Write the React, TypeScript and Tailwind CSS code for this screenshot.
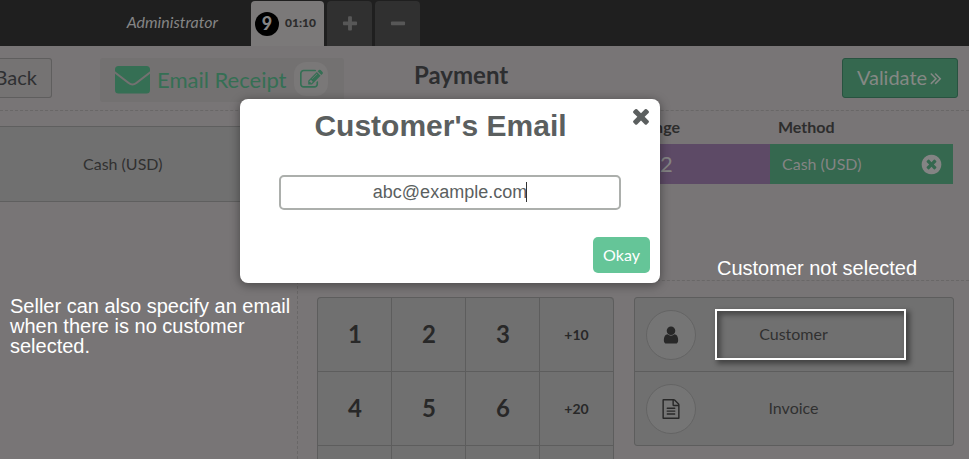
import React from "react";

const ICONS = {
  times:
    "M1490 1322q0 40-28 68l-136 136q-28 28-68 28t-68-28l-294-294-294 294q-28 28-68 28t-68-28l-136-136q-28-28-28-68t28-68l294-294-294-294q-28-28-28-68t28-68l136-136q28-28 68-28t68 28l294 294 294-294q28-28 68-28t68 28l136 136q28 28 28 68t-28 68l-294 294 294 294q28 28 28 68z",
  plus: "M1600 736v192q0 40-28 68t-68 28h-416v416q0 40-28 68t-68 28h-192q-40 0-68-28t-28-68v-416h-416q-40 0-68-28t-28-68v-192q0-40 28-68t68-28h416v-416q0-40 28-68t68-28h192q40 0 68 28t28 68v416h416q40 0 68 28t28 68z",
  minus:
    "M1600 736v192q0 40-28 68t-68 28h-1216q-40 0-68-28t-28-68v-192q0-40 28-68t68-28h1216q40 0 68 28t28 68z",
  angleDouble:
    "M979 960q0 13-10 23l-466 466q-10 10-23 10t-23-10l-50-50q-10-10-10-23t10-23l393-393-393-393q-10-10-10-23t10-23l50-50q10-10 23-10t23 10l466 466q10 10 10 23zm384 0q0 13-10 23l-466 466q-10 10-23 10t-23-10l-50-50q-10-10-10-23t10-23l393-393-393-393q-10-10-10-23t10-23l50-50q10-10 23-10t23 10l466 466q10 10 10 23z",
  edit: "M888 1184l116-116-152-152-116 116v56h96v96h56zm440-720q-16-16-33 1l-350 350q-17 17-1 33t33-1l350-350q17-17 1-33zm80 594v190q0 119-84.5 203.5t-203.5 84.5h-832q-119 0-203.5-84.5t-84.5-203.5v-832q0-119 84.5-203.5t203.5-84.5h832q63 0 117 25 15 7 18 23 3 17-9 29l-49 49q-14 14-32 8-23-6-45-6h-832q-66 0-113 47t-47 113v832q0 66 47 113t113 47h832q66 0 113-47t47-113v-126q0-13 9-22l64-64q15-15 35-7t20 29zm-96-738l288 288-672 672h-288v-288zm444 132l-92 92-288-288 92-92q28-28 68-28t68 28l152 152q28 28 28 68t-28 68z",
  file: "M1596 380q28 28 48 76t20 88v1152q0 40-28 68t-68 28h-1344q-40 0-68-28t-28-68v-1600q0-40 28-68t68-28h896q40 0 88 20t76 48zm-444-244v376h376q-10-29-22-41l-313-313q-12-12-41-22zm384 1528v-1024h-416q-40 0-68-28t-28-68v-416h-768v1536h1280zm-1024-864q0-14 9-23t23-9h704q14 0 23 9t9 23v64q0 14-9 23t-23 9h-704q-14 0-23-9t-9-23v-64zm736 224q14 0 23 9t9 23v64q0 14-9 23t-23 9h-704q-14 0-23-9t-9-23v-64q0-14 9-23t23-9h704zm0 256q14 0 23 9t9 23v64q0 14-9 23t-23 9h-704q-14 0-23-9t-9-23v-64q0-14 9-23t23-9h704z",
  user: "M1536 1399q0 109-62.5 187t-150.5 78h-854q-88 0-150.5-78t-62.5-187q0-85 8.5-160.5t31.5-152 58.5-131 94-89 134.5-34.5q131 128 313 128t313-128q76 0 134.5 34.5t94 89 58.5 131 31.5 152 8.5 160.5zm-256-887q0 159-112.5 271.5t-271.5 112.5-271.5-112.5-112.5-271.5 112.5-271.5 271.5-112.5 271.5 112.5 112.5 271.5z",
  timesCircle:
    "M1277 1122q0-26-19-45l-181-181 181-181q19-19 19-45 0-27-19-46l-90-90q-19-19-46-19-26 0-45 19l-181 181-181-181q-19-19-45-19-27 0-46 19l-90 90q-19 19-19 46 0 26 19 45l181 181-181 181q-19 19-19 45 0 27 19 46l90 90q19 19 46 19 26 0 45-19l181-181 181 181q19 19 45 19 27 0 46-19l90-90q19-19 19-46zm387-226q0 209-103 385.5t-279.5 279.5-385.5 103-385.5-103-279.5-279.5-103-385.5 103-385.5 279.5-279.5 385.5-103 385.5 103 279.5 279.5 103 385.5z",
};

function Icon({ name, className }: { name: keyof typeof ICONS; className: string }) {
  return (
    <svg viewBox="0 0 1792 1792" fill="currentColor" className={`shrink-0 ${className}`}>
      <path d={ICONS[name]} />
    </svg>
  );
}

function TopBar() {
  return (
    <header className="flex h-[46px] shrink-0 items-end bg-[#1f1f1f]">
      <div className="flex h-[46px] w-[251px] items-center justify-end pr-[33px] pb-[2px] text-base text-[#858585] italic">
        Administrator
      </div>
      <div className="flex h-[45px] gap-[3px]">
        <div className="flex w-[73px] items-center rounded-t bg-[#7b7979] pl-1">
          <span className="flex size-6 items-center justify-center rounded-full bg-black pb-px text-lg leading-none font-black text-[#858585]">
            9
          </span>
          <span className="ml-[6px] pb-[2px] text-[12px] font-black text-[#2b2b2b]">01:10</span>
        </div>
        <div className="flex w-[45px] items-center justify-center rounded-t bg-[#303030] text-[#575757]">
          <Icon name="plus" className="size-[18px]" />
        </div>
        <div className="flex w-[45px] items-center justify-center rounded-t bg-[#303030] text-[#575757]">
          <Icon name="minus" className="size-[18px]" />
        </div>
      </div>
    </header>
  );
}

function ScreenHeader() {
  return (
    <div className="flex h-[65px] shrink-0 items-start border-b border-dashed border-[#696767] pt-3">
      <div className="flex h-10 w-[52px] items-center justify-end rounded-r-[3px] border border-l-0 border-[#5f5e5e] bg-[#757373] pr-[14px] pb-[2px] text-xl text-[#2f3032]">
        Back
      </div>
      <div className="ml-12 flex h-11 w-[244px] items-center rounded-[3px] bg-[#737171] pl-[15px] text-[#356f54]">
        <svg viewBox="0 0 35 28" className="h-7 w-[35px]" fill="currentColor">
          <path d="M3.5 0h28A3.5 3.5 0 0 1 35 3.5v1.7L20.3 16.5q-2.800 2.100-5.600 0L0 5.200V3.500A3.500 3.500 0 0 1 3.500 0z" />
          <path d="M0 7.700l13 10q4.500 3.400 9 0l13-10v16.300a3.500 3.500 0 0 1-3.500 3.500h-28A3.500 3.500 0 0 1 0 24z" />
        </svg>
        <span className="ml-[7px] w-[130px] pb-px text-[22px] leading-8 whitespace-nowrap">Email Receipt</span>
        <span className="mb-[2px] ml-[7px] flex size-[34px] items-center justify-center rounded-[12px] bg-[#7a7878]">
          <Icon name="edit" className="size-[23px]" />
        </span>
      </div>
      <h1 className="ml-[70px] w-[96px] pt-[2px] text-[24px] leading-[30px] font-bold text-[#2d2e30]">Payment</h1>
      <div className="mr-[11px] ml-auto flex h-10 w-[116px] items-center justify-center rounded-[3px] border border-[#285340] bg-[#35684f] pb-[2px] text-xl text-[#858885]">
        <span>Validate</span>
        <Icon name="angleDouble" className="mt-px -mr-[3px] -ml-px size-5" />
      </div>
    </div>
  );
}

function PaymentLines() {
  return (
    <div className="h-[170px] border-b border-dashed border-[#696767] text-base text-[#2d2d2d]">
      <div className="flex h-[33px] items-center pr-[23px] pb-[2px] font-bold">
        <span className="w-[382px] text-right">Change</span>
        <span className="ml-[98px]">Method</span>
      </div>
      <div className="mr-4 ml-5 flex h-10 text-[#848484]">
        <div className="flex w-[452px] items-center bg-[#5d4a66] pb-px pl-[342px] text-[22px]">2</div>
        <div className="flex flex-1 items-center justify-between bg-[#35684f] pr-[10px] pl-3">
          Cash (USD)
          <Icon name="timesCircle" className="size-[23px]" />
        </div>
      </div>
    </div>
  );
}

const KEYS = ["1", "2", "3", "+10", "4", "5", "6", "+20", "", "", "", ""];

function Numpad() {
  return (
    <div className="grid w-[297px] shrink-0 auto-rows-[74px] grid-cols-4 content-start rounded-t border-t border-l border-[#5d5d5d] bg-[#707070] text-[#282828]">
      {KEYS.map((k, i) => (
        <div
          key={i}
          className={`flex items-center justify-center border-r border-b border-[#5d5d5d] font-bold ${
            k.startsWith("+") ? "pt-px text-sm" : "pb-[2px] pl-px text-2xl"
          } ${i === 3 ? "rounded-tr" : ""}`}
        >
          {k}
        </div>
      ))}
    </div>
  );
}

function Option({ icon, label, first }: { icon: "user" | "file"; label: string; first?: boolean }) {
  return (
    <div className={`flex items-center pl-[11px] ${first ? "h-[74px] border-b border-[#5d5d5d]" : "h-[73px]"}`}>
      <span className="flex size-[50px] items-center justify-center rounded-full border border-[#646464] bg-[#757575] text-[#282828]">
        <Icon name={icon} className="size-5" />
      </span>
      <span className="flex-1 pr-[62px] pb-px text-center">{label}</span>
    </div>
  );
}

function EmailDialog() {
  return (
    <div className="absolute top-[99px] left-[240px] flex h-[184px] w-[420px] flex-col rounded-[8px] bg-white font-['Liberation_Sans',sans-serif] text-[#5b5f5f] shadow-[0_2px_10px_1px_rgba(0,0,0,0.35)]">
      <h2 className="pt-[9px] pr-[19px] text-center text-[30px] leading-9 font-bold">Customer's Email</h2>
      <div className="mx-auto mt-[31px] flex h-[35px] w-[342px] items-center justify-center rounded-[5px] border-2 border-[#acafac] text-lg">
        <span className="-mt-px">abc@example.com</span>
        <span className="-mt-px -ml-px h-[20px] w-px bg-[#333]" />
      </div>
      <button className="mt-[27px] mr-[10px] ml-auto h-9 w-[57px] rounded-[5px] bg-[#65c598] font-[Lato,sans-serif] text-base text-white">
        Okay
      </button>
      <Icon name="times" className="absolute top-[5px] right-[7px] size-6" />
    </div>
  );
}

export default function App() {
  return (
    <div className="relative flex h-[459px] w-[969px] flex-col overflow-hidden bg-[#787576] font-[Lato,sans-serif]">
      <TopBar />
      <ScreenHeader />
      <div className="flex h-[348px] shrink-0 overflow-hidden">
        <div className="w-[298px] shrink-0 border-r border-dashed border-[#696767] pt-[15px]">
          <div className="flex h-[76px] items-center border-y border-[#5f5f5f] bg-[#707070] pl-[83px] text-base text-[#303030]">
            Cash (USD)
          </div>
        </div>
        <div className="flex-1">
          <PaymentLines />
          <div className="flex items-start gap-5 pt-4 pl-[19px]">
            <Numpad />
            <div className="h-[149px] w-[320px] rounded-[3px] border border-[#5d5d5d] bg-[#707070] text-base text-[#303030]">
              <Option icon="user" label="Customer" first />
              <Option icon="file" label="Invoice" />
            </div>
          </div>
        </div>
      </div>

      <EmailDialog />

      <p className="absolute top-[296px] left-[10px] w-[290px] font-['Liberation_Sans',sans-serif] text-xl leading-5 text-white">
        Seller can also specify an email
        <br />
        when there is no customer
        <br />
        selected.
      </p>
      <p className="absolute top-[258px] left-[717px] font-['Liberation_Sans',sans-serif] text-xl leading-5 whitespace-nowrap text-white">
        Customer not selected
      </p>
      <div className="absolute top-[309px] left-[715px] h-[51px] w-[191px] border-2 border-white shadow-[3px_3px_5px_1px_rgba(0,0,0,0.4),inset_3px_3px_5px_1px_rgba(0,0,0,0.35)]" />
    </div>
  );
}
